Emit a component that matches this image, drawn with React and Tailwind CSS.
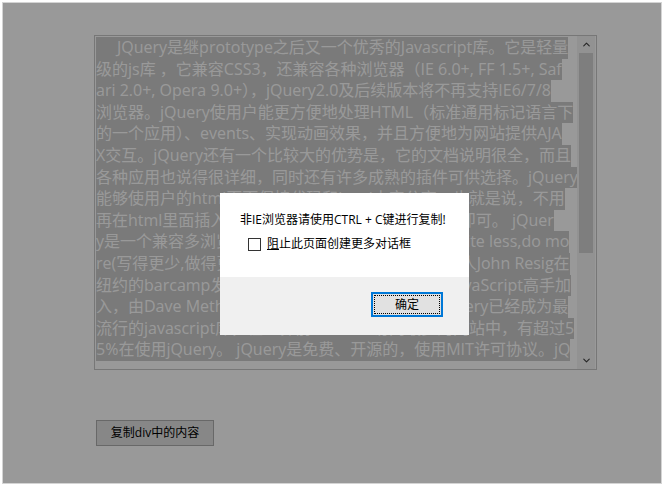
import { ChevronUp, ChevronDown } from 'lucide-react'

// lines as they wrap inside the scroll box
const lines = [
  'JQuery是继prototype之后又一个优秀的Javascript库。它是轻量',
  '级的js库 ，它兼容CSS3，还兼容各种浏览器（IE 6.0+, FF 1.5+, Saf',
  'ari 2.0+, Opera 9.0+），jQuery2.0及后续版本将不再支持IE6/7/8',
  '浏览器。jQuery使用户能更方便地处理HTML（标准通用标记语言下',
  '的一个应用）、events、实现动画效果，并且方便地为网站提供AJA',
  'X交互。jQuery还有一个比较大的优势是，它的文档说明很全，而且',
  '各种应用也说得很详细，同时还有许多成熟的插件可供选择。jQuery',
  '能够使用户的html页面保持代码和html内容分离，也就是说，不用',
  '再在html里面插入一堆js来调用命令了，只需定义id即可。 jQuer',
  'y是一个兼容多浏览器的javascript库，核心理念是write less,do mo',
  're(写得更少,做得更多)。jQuery在2006年1月由美国人John Resig在',
  '纽约的barcamp发布，吸引了来自世界各地的众多JavaScript高手加',
  '入，由Dave Methvin率领团队进行开发。如今，jQuery已经成为最',
  '流行的javascript库，在世界前10000个访问最多的网站中，有超过5',
  '5%在使用jQuery。 jQuery是免费、开源的，使用MIT许可协议。jQ',
]

const font = "font-['Open_Sans','Noto_Sans_CJK_SC',sans-serif]"

const App = () => {
  return (
    <div className={`relative w-[664px] h-[486px] bg-white p-[2px] ${font}`}>
      {/* page window */}
      <div className="relative h-full border border-[#d4d4d4] bg-white pl-[91px] pt-[32px]">
        {/* scroll box */}
        <div className="flex w-[503px] h-[335px] border border-[#c6c6c6] pl-[1px] pt-[1px]">
          <div className="w-[481px] overflow-hidden text-[16px] leading-[21.6px] text-white">
            {lines.map((line, i) => (
              <div key={i} className="whitespace-nowrap">
                <span className={`inline-block bg-[#cbcbcb] ${i === 0 ? 'pl-[21px]' : ''}`}>{line}</span>
              </div>
            ))}
          </div>
          {/* scrollbar */}
          <div className="flex flex-col w-[18px] h-[333px] -mt-[1px] bg-[#f4f4f4]">
            <div className="flex h-[17px] items-center justify-center text-[#404040]">
              <ChevronUp size={11} strokeWidth={2.5} />
            </div>
            <div className="flex-1 px-[2px]">
              <div className="h-[200px] bg-[#d2d2d2]" />
            </div>
            <div className="flex h-[17px] items-center justify-center text-[#404040]">
              <ChevronDown size={11} strokeWidth={2.5} />
            </div>
          </div>
        </div>
        <button className="mt-[50px] ml-[2px] w-[118px] h-[26px] border border-[#adadad] bg-[#e1e1e1] text-[12px] text-black">
          复制div中的内容
        </button>
        {/* modal backdrop */}
        <div className="absolute inset-0 bg-black/40" />
      </div>

      {/* alert dialog */}
      <div className="absolute left-[220px] top-[193px] w-[249px] text-[12px] text-black">
        <div className="h-[84px] bg-white pl-[20px] pt-[19px]">
          <div className="leading-[16px]">非IE浏览器请使用CTRL + C键进行复制!</div>
          <label className="mt-[8px] ml-[8px] flex items-center gap-[6px] leading-[16px]">
            <span className="w-[13px] h-[13px] border border-[#333333] bg-white" />
            <span>
              <span className="underline">阻</span>止此页面创建更多对话框
            </span>
          </label>
        </div>
        <div className="flex h-[58px] justify-end bg-[#f0f0f0] pr-[26px] pt-[15px]">
          <button className="flex w-[72px] h-[25px] border-2 border-[#0078d7] bg-[#e1e1e1] p-[1px]">
            <span className="flex flex-1 items-center justify-center border border-dotted border-black">确定</span>
          </button>
        </div>
      </div>
    </div>
  )
}

export default App
